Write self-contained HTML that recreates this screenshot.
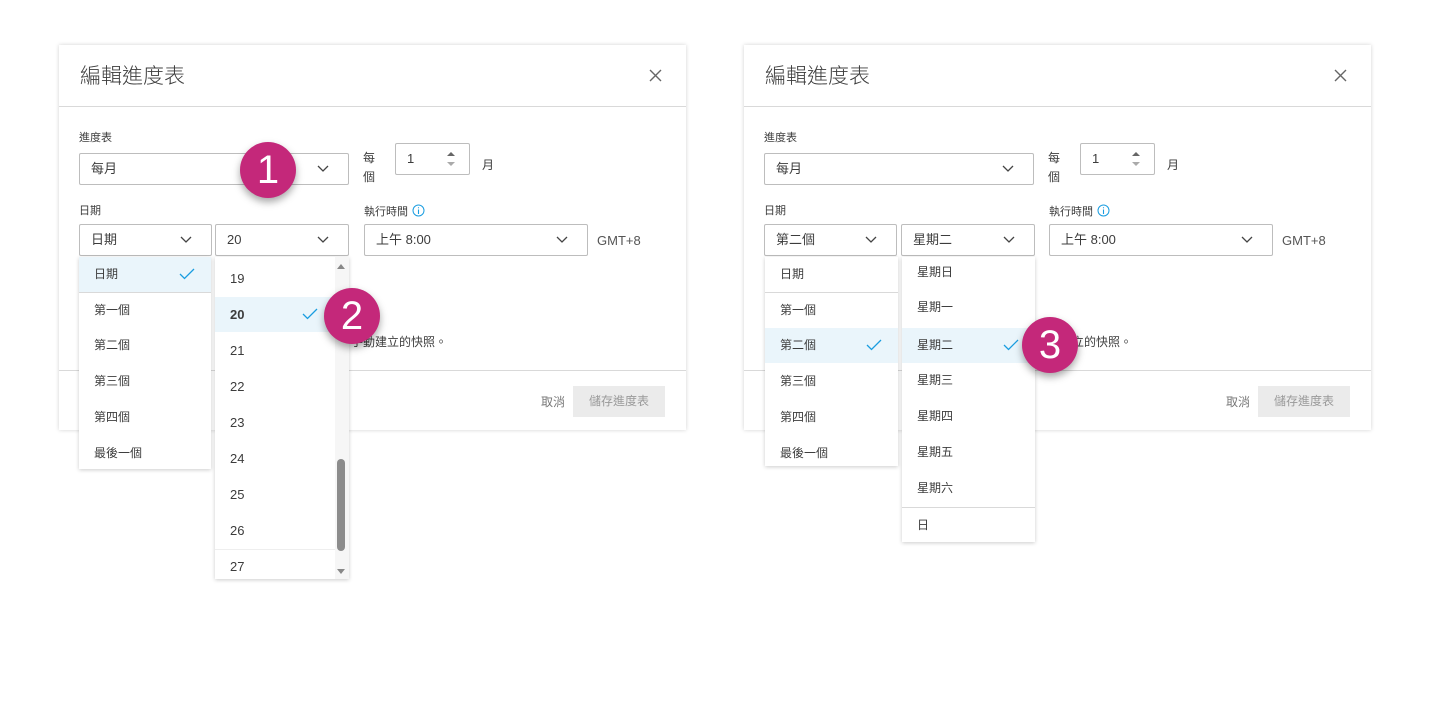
<!DOCTYPE html>
<html><head><meta charset="utf-8"><style>
*{box-sizing:border-box;margin:0;padding:0}
body{width:1435px;height:727px;background:#fff;position:relative;overflow:hidden;font-family:"Liberation Sans","Noto Sans CJK TC",sans-serif;color:#3c3c3c}
.a{position:absolute}
.dlg{position:absolute;top:45px;width:627px;height:385px;background:#fff;box-shadow:0 0 4px rgba(0,0,0,.18)}
.title{position:absolute;left:21px;top:15px;font-size:21px;color:#3c3c3c;font-weight:300}
.hl{position:absolute;left:0;right:0;height:1px;background:#d9d9d9}
.lbl{position:absolute;font-size:11px;color:#3c3c3c}
.sel{position:absolute;border:1px solid #bdbdbd;border-radius:2px;height:32px;font-size:13px;line-height:30px;padding-left:11px;background:#fff}
.chev{position:absolute;right:19px;top:11px;width:12px;height:8px}
.menu{position:absolute;background:#fff;box-shadow:0 1px 4px rgba(0,0,0,.2);font-size:12px;overflow:hidden}
.it{position:absolute;left:0;right:0;height:35px;line-height:35px;padding-left:15px}
.it.s{background:#eaf5fb}
.ck{position:absolute;right:16px;top:11px;width:16px;height:12px}
.sep{position:absolute;left:0;right:0;height:1px;background:#d9d9d9}
.badge{position:absolute;width:56px;height:56px;border-radius:50%;background:#c4287a;color:#fff;font-size:40px;line-height:56px;text-align:center;box-shadow:0 4px 8px rgba(0,0,0,.35);font-family:"Liberation Sans",sans-serif}
</style></head><body>

<!-- LEFT DIALOG -->
<div class="dlg" style="left:59px">
<div class="title">編輯進度表</div>
<svg class="a" style="left:590px;top:24px" width="13" height="13"><path d="M1 1L12 12M12 1L1 12" stroke="#666" stroke-width="1.4"/></svg>
<div class="hl" style="top:61px"></div>
<div class="lbl" style="left:20px;top:84px">進度表</div>
<div class="sel" style="left:20px;top:108px;width:270px">每月<svg class="chev" viewBox="0 0 12 8"><path d="M1 1L6 6L11 1" fill="none" stroke="#444" stroke-width="1.3"/></svg></div>
<div class="lbl" style="left:304px;top:104px;font-size:12px;line-height:19px">每<br>個</div>
<div class="sel" style="left:336px;top:98px;width:75px;height:32px">1<svg class="a" style="left:50px;top:7px" width="10" height="16"><path d="M1 5L5 1L9 5Z" fill="#666"/><path d="M1 11L5 15L9 11Z" fill="#aaa"/></svg></div>
<div class="lbl" style="left:423px;top:111px;font-size:12px">月</div>
<div class="lbl" style="left:20px;top:157px">日期</div>
<div class="sel" style="left:20px;top:179px;width:133px">日期<svg class="chev" viewBox="0 0 12 8"><path d="M1 1L6 6L11 1" fill="none" stroke="#444" stroke-width="1.3"/></svg></div>
<div class="sel" style="left:156px;top:179px;width:134px">20<svg class="chev" viewBox="0 0 12 8"><path d="M1 1L6 6L11 1" fill="none" stroke="#444" stroke-width="1.3"/></svg></div>
<div class="lbl" style="left:305px;top:158px">執行時間</div>
<svg class="a" style="left:353px;top:159px" width="13" height="13"><circle cx="6.5" cy="6.5" r="5.5" fill="none" stroke="#1a9de0" stroke-width="1"/><path d="M6.5 5.5V10M6.5 3.3V4.3" stroke="#1a9de0" stroke-width="1.1"/></svg>
<div class="sel" style="left:305px;top:179px;width:224px">上午 8:00<svg class="chev" viewBox="0 0 12 8"><path d="M1 1L6 6L11 1" fill="none" stroke="#444" stroke-width="1.3"/></svg></div>
<div class="lbl" style="left:538px;top:188px;font-size:13px;color:#555">GMT+8</div>
<div class="lbl" style="left:292px;top:288px;font-size:12px">手動建立的快照。</div>
<div class="hl" style="top:325px"></div>
<div class="lbl" style="left:482px;top:348px;font-size:12px;color:#777">取消</div>
<div class="a" style="left:514px;top:341px;width:92px;height:31px;background:#ebebeb;color:#999;font-size:12px;line-height:31px;text-align:center">儲存進度表</div>
</div>

<div class="menu" style="left:79px;top:257px;width:132px;height:212px">
<div class="it s" style="top:0">日期<svg class="ck" viewBox="0 0 16 12"><path d="M1 6L5.5 10.5L15 1" fill="none" stroke="#1a9de0" stroke-width="1.3"/></svg></div>
<div class="sep" style="top:35px"></div>
<div class="it" style="top:36px">第一個</div>
<div class="it" style="top:71px">第二個</div>
<div class="it" style="top:107px">第三個</div>
<div class="it" style="top:143px">第四個</div>
<div class="it" style="top:179px">最後一個</div>
</div>

<div class="menu" style="left:215px;top:257px;width:134px;height:322px;font-size:13px">
<div class="it" style="top:4px">19</div>
<div class="it s" style="top:40px;right:11px;font-weight:bold">20<svg class="ck" viewBox="0 0 16 12" style="right:20px"><path d="M1 6L5.5 10.5L15 1" fill="none" stroke="#1a9de0" stroke-width="1.3"/></svg></div>
<div class="it" style="top:76px">21</div>
<div class="it" style="top:112px">22</div>
<div class="it" style="top:148px">23</div>
<div class="it" style="top:184px">24</div>
<div class="it" style="top:220px">25</div>
<div class="it" style="top:256px">26</div>
<div class="sep" style="top:292px;background:#eee"></div>
<div class="it" style="top:292px">27</div>
<div class="a" style="left:120px;top:0;width:14px;height:322px;background:#f6f6f6"></div>
<svg class="a" style="left:120px;top:4px" width="12" height="10"><path d="M2 8L6 3L10 8Z" fill="#888"/></svg>
<svg class="a" style="left:120px;top:310px" width="12" height="10"><path d="M2 2L6 7L10 2Z" fill="#888"/></svg>
<div class="a" style="left:122px;top:202px;width:8px;height:92px;border-radius:4px;background:#8c8c8c"></div>
</div>

<div class="badge" style="left:240px;top:142px">1</div>
<div class="badge" style="left:324px;top:288px">2</div>

<!-- RIGHT DIALOG -->
<div class="dlg" style="left:744px">
<div class="title">編輯進度表</div>
<svg class="a" style="left:590px;top:24px" width="13" height="13"><path d="M1 1L12 12M12 1L1 12" stroke="#666" stroke-width="1.4"/></svg>
<div class="hl" style="top:61px"></div>
<div class="lbl" style="left:20px;top:84px">進度表</div>
<div class="sel" style="left:20px;top:108px;width:270px">每月<svg class="chev" viewBox="0 0 12 8"><path d="M1 1L6 6L11 1" fill="none" stroke="#444" stroke-width="1.3"/></svg></div>
<div class="lbl" style="left:304px;top:104px;font-size:12px;line-height:19px">每<br>個</div>
<div class="sel" style="left:336px;top:98px;width:75px;height:32px">1<svg class="a" style="left:50px;top:7px" width="10" height="16"><path d="M1 5L5 1L9 5Z" fill="#666"/><path d="M1 11L5 15L9 11Z" fill="#aaa"/></svg></div>
<div class="lbl" style="left:423px;top:111px;font-size:12px">月</div>
<div class="lbl" style="left:20px;top:157px">日期</div>
<div class="sel" style="left:20px;top:179px;width:133px">第二個<svg class="chev" viewBox="0 0 12 8"><path d="M1 1L6 6L11 1" fill="none" stroke="#444" stroke-width="1.3"/></svg></div>
<div class="sel" style="left:157px;top:179px;width:134px">星期二<svg class="chev" viewBox="0 0 12 8"><path d="M1 1L6 6L11 1" fill="none" stroke="#444" stroke-width="1.3"/></svg></div>
<div class="lbl" style="left:305px;top:158px">執行時間</div>
<svg class="a" style="left:353px;top:159px" width="13" height="13"><circle cx="6.5" cy="6.5" r="5.5" fill="none" stroke="#1a9de0" stroke-width="1"/><path d="M6.5 5.5V10M6.5 3.3V4.3" stroke="#1a9de0" stroke-width="1.1"/></svg>
<div class="sel" style="left:305px;top:179px;width:224px">上午 8:00<svg class="chev" viewBox="0 0 12 8"><path d="M1 1L6 6L11 1" fill="none" stroke="#444" stroke-width="1.3"/></svg></div>
<div class="lbl" style="left:538px;top:188px;font-size:13px;color:#555">GMT+8</div>
<div class="lbl" style="left:292px;top:288px;font-size:12px">手動建立的快照。</div>
<div class="hl" style="top:325px"></div>
<div class="lbl" style="left:482px;top:348px;font-size:12px;color:#777">取消</div>
<div class="a" style="left:514px;top:341px;width:92px;height:31px;background:#ebebeb;color:#999;font-size:12px;line-height:31px;text-align:center">儲存進度表</div>
</div>

<div class="menu" style="left:765px;top:257px;width:133px;height:209px">
<div class="it" style="top:0">日期</div>
<div class="sep" style="top:35px"></div>
<div class="it" style="top:36px">第一個</div>
<div class="it s" style="top:71px">第二個<svg class="ck" viewBox="0 0 16 12"><path d="M1 6L5.5 10.5L15 1" fill="none" stroke="#1a9de0" stroke-width="1.3"/></svg></div>
<div class="it" style="top:107px">第三個</div>
<div class="it" style="top:143px">第四個</div>
<div class="it" style="top:179px">最後一個</div>
</div>

<div class="menu" style="left:902px;top:257px;width:133px;height:285px">
<div class="it" style="top:-2px">星期日</div>
<div class="it" style="top:33px">星期一</div>
<div class="it s" style="top:71px">星期二<svg class="ck" viewBox="0 0 16 12"><path d="M1 6L5.5 10.5L15 1" fill="none" stroke="#1a9de0" stroke-width="1.3"/></svg></div>
<div class="it" style="top:106px">星期三</div>
<div class="it" style="top:142px">星期四</div>
<div class="it" style="top:178px">星期五</div>
<div class="it" style="top:214px">星期六</div>
<div class="sep" style="top:250px"></div>
<div class="it" style="top:251px">日</div>
</div>

<div class="badge" style="left:1022px;top:317px">3</div>
</body></html>
